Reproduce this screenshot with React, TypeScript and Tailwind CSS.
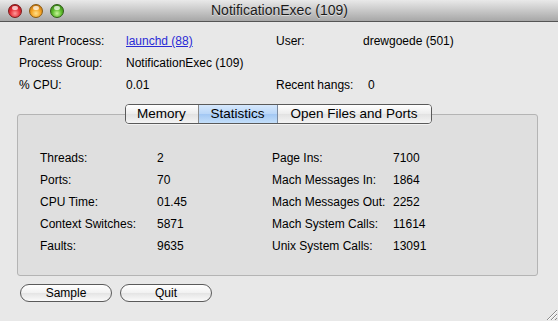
const font = { fontFamily: '"Liberation Sans", Arial, sans-serif' }

const info = [
  { label: 'Parent Process:', value: 'launchd (88)', link: true, rLabel: 'User:', rValue: 'drewgoede (501)' },
  { label: 'Process Group:', value: 'NotificationExec (109)', link: false, rLabel: '', rValue: '' },
  { label: '% CPU:', value: '0.01', link: false, rLabel: 'Recent hangs:', rValue: '0' },
]

const stats = [
  ['Threads:', '2', 'Page Ins:', '7100'],
  ['Ports:', '70', 'Mach Messages In:', '1864'],
  ['CPU Time:', '01.45', 'Mach Messages Out:', '2252'],
  ['Context Switches:', '5871', 'Mach System Calls:', '11614'],
  ['Faults:', '9635', 'Unix System Calls:', '13091'],
]

function Light({ color }: { color: 'red' | 'orange' | 'green' }) {
  const cls =
    color === 'red'
      ? 'bg-[radial-gradient(circle_at_50%_70%,#ff9a9a_0%,#e8323a_45%,#9c0f14_100%)] border-[#7a1a1a]'
      : color === 'orange'
      ? 'bg-[radial-gradient(circle_at_50%_70%,#ffe08a_0%,#f5a526_45%,#a85a06_100%)] border-[#8a5a10]'
      : 'bg-[radial-gradient(circle_at_50%_70%,#c8f59a_0%,#5cbb2c_45%,#2a6e0e_100%)] border-[#2f5e16]'
  return (
    <div className={`relative w-[14px] h-[14px] rounded-full border ${cls}`}>
      <div className="absolute left-[3px] top-[1px] w-[6px] h-[4px] rounded-full bg-white/70" />
    </div>
  )
}

export default function App() {
  return (
    <div className="relative w-[558px] h-[321px] bg-[#e8e8e8] overflow-hidden text-black" style={font}>
      {/* title bar */}
      <div className="relative h-[22px] border-b border-[#555] bg-[linear-gradient(#e9e9e9,#a7a7a7)] flex items-center">
        <div className="flex items-center gap-[7px] pl-[8px]">
          <Light color="red" />
          <Light color="orange" />
          <Light color="green" />
        </div>
        <div className="absolute left-[211px] top-0 h-[21px] flex items-center text-[14px] text-[#1a1a1a] [text-shadow:0_1px_0_rgba(255,255,255,0.5)]">
          NotificationExec (109)
        </div>
      </div>

      {/* process info */}
      <div className="pt-[8px] pl-[19px] text-[12px] leading-[22px]">
        {info.map((r) => (
          <div key={r.label} className="flex h-[22px]">
            <div className="w-[107px]">{r.label}</div>
            <div className="w-[150px]">
              {r.link ? <span className="text-[#2a2ad6] underline">{r.value}</span> : r.value}
            </div>
            <div className={r.rLabel === 'Recent hangs:' ? 'w-[92px]' : 'w-[87px]'}>{r.rLabel}</div>
            <div>{r.rValue}</div>
          </div>
        ))}
      </div>

      {/* tabs + group box */}
      <div className="mt-[8px] ml-[17px] w-[521px]">
        <div className="relative z-10 flex justify-center pl-[1px]">
          <div className="flex h-[20px] rounded-[4px] border border-[#5a5a5a] overflow-hidden text-[13.5px] leading-[18px] shadow-[0_1px_0_rgba(255,255,255,0.6)]">
            <div className="w-[73px] text-center bg-[linear-gradient(#ffffff,#ececec_50%,#e2e2e2_51%,#f4f4f4)] border-r border-[#8a8a8a]">Memory</div>
            <div className="w-[79px] text-center bg-[linear-gradient(#d6e8fc,#b9d6f8_50%,#a2c7f3_51%,#c4dffa)] border-r border-[#7a8aa0]">Statistics</div>
            <div className="w-[153px] text-center bg-[linear-gradient(#ffffff,#ececec_50%,#e2e2e2_51%,#f4f4f4)]">Open Files and Ports</div>
          </div>
        </div>
        <div className="-mt-[10px] w-[521px] h-[162px] rounded-[3px] border border-[#b4b4b4] bg-[#dfdfdf] pt-[32px] pl-[22px] text-[12px] leading-[22px]">
          {stats.map((s) => (
            <div key={s[0]} className="flex h-[22px]">
              <div className="w-[117px]">{s[0]}</div>
              <div className="w-[115px]">{s[1]}</div>
              <div className="w-[121px]">{s[2]}</div>
              <div>{s[3]}</div>
            </div>
          ))}
        </div>
      </div>

      {/* buttons */}
      <div className="flex gap-[8px] pl-[20px] mt-[8px] text-[12px]">
        {['Sample', 'Quit'].map((b) => (
          <div
            key={b}
            className="w-[92px] h-[18px] rounded-full border border-[#5a5a5a] bg-[linear-gradient(#ffffff,#f1f1f1_50%,#e4e4e4_51%,#fafafa)] flex items-center justify-center leading-[16px]"
          >
            {b}
          </div>
        ))}
      </div>

      {/* resize grip */}
      <svg className="absolute right-0 bottom-0" width="14" height="14" viewBox="0 0 14 14">
        <path d="M13 3 L3 13 M13 7 L7 13 M13 11 L11 13" stroke="#8a8a8a" strokeWidth="1" />
        <path d="M13 4 L4 13 M13 8 L8 13" stroke="#ffffff" strokeWidth="1" />
      </svg>
    </div>
  )
}
